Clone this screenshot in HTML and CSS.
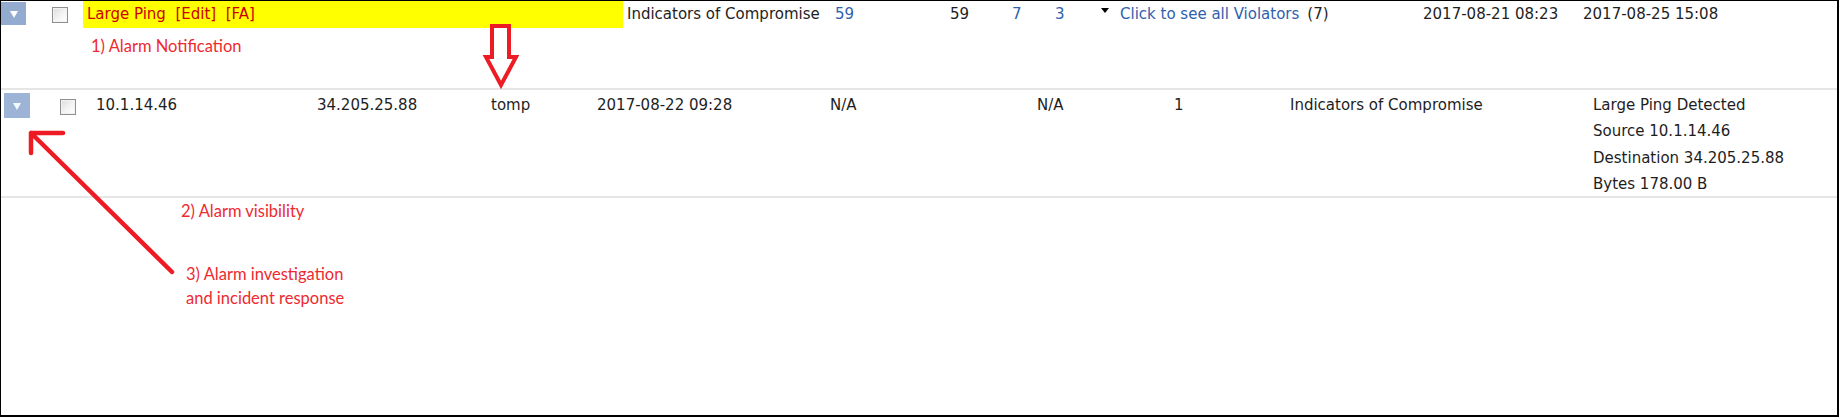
FILE: index.html
```html
<!DOCTYPE html>
<html>
<head>
<meta charset="utf-8">
<link rel="stylesheet" href="styles.css">
</head>
<body>
<div class="page">
  <div class="frame">
    <div class="row row-alarm">
      <div class="cell"><span class="toggle"></span></div>
      <div class="cell"><span class="check check-top"></span></div>
      <div class="cell name-cell">
        <div class="name">Large Ping&nbsp; [Edit]&nbsp; [FA]</div>
        <div class="note note-1">1) Alarm Notification</div>
      </div>
      <div class="cell cat">Indicators of Compromise</div>
      <div class="cell link">59</div>
      <div class="cell">59</div>
      <div class="cell link">7</div>
      <div class="cell link">3</div>
      <div class="cell violators"><span class="caret"></span><span class="link">Click to see all Violators</span><span class="count">(7)</span></div>
      <div class="cell">2017-08-21 08:23</div>
      <div class="cell">2017-08-25 15:08</div>
    </div>
    <div class="row row-event">
      <div class="cell"><span class="toggle toggle-light"></span></div>
      <div class="cell"><span class="check check-event"></span></div>
      <div class="cell">10.1.14.46</div>
      <div class="cell">34.205.25.88</div>
      <div class="cell">tomp</div>
      <div class="cell">2017-08-22 09:28</div>
      <div class="cell">N/A</div>
      <div class="cell">N/A</div>
      <div class="cell">1</div>
      <div class="cell">Indicators of Compromise</div>
      <div class="cell details">
        <div>Large Ping Detected</div>
        <div>Source 10.1.14.46</div>
        <div>Destination 34.205.25.88</div>
        <div>Bytes 178.00 B</div>
      </div>
    </div>
    <div class="notes">
      <div class="note note-2">2) Alarm visibility</div>
      <div class="note note-3">3) Alarm investigation<br>and incident response</div>
    </div>
  </div>
  <svg class="marks" width="1839" height="417" viewBox="0 0 1839 417">
    <path d="M492,26 H509 V57 H516 L501,85 L486,57 H492 Z" fill="none" stroke="#ed1c24" stroke-width="4" stroke-linejoin="miter"/>
    <path d="M63,133 H31 V153 M31,133 L172,272" fill="none" stroke="#ed1c24" stroke-width="4.5" stroke-linecap="round" stroke-linejoin="round"/>
  </svg>
</div>
</body>
</html>
```
FILE: styles.css
```css
html, body {
  margin: 0;
  padding: 0;
  background: #ffffff;
}

.page {
  position: relative;
  width: 1839px;
  height: 417px;
}

.frame {
  box-sizing: border-box;
  width: 1839px;
  height: 417px;
  border-style: solid;
  border-color: #000000;
  border-width: 1px 2px 2px 1px;
  background: #ffffff;
  font-family: "DejaVu Sans", Verdana, sans-serif;
  font-size: 15px;
  color: #1e1e1e;
}

.row {
  display: grid;
  border-bottom: 2px solid #e6e6e6;
}

.row-alarm {
  grid-template-columns: 51px 31px 540px 212px 115px 62px 43px 46px 322px 160px 1fr;
  height: 87px;
  line-height: 27px;
}

.row-event {
  grid-template-columns: 59px 36px 221px 174px 106px 233px 207px 137px 116px 303px 1fr;
  height: 104px;
  padding-top: 2px;
  line-height: 26.3px;
}

.cell {
  white-space: nowrap;
}

.toggle {
  display: flex;
  align-items: center;
  justify-content: center;
  width: 25px;
  height: 23px;
  margin-top: 1px;
  background: #93abcf;
}

.toggle::after {
  content: "";
  display: block;
  width: 0;
  height: 0;
  margin-top: 1px;
  border-left: 4px solid transparent;
  border-right: 4px solid transparent;
  border-top: 7px solid #ffffff;
}

.toggle-light {
  width: 26px;
  height: 25px;
  margin-top: 1px;
  margin-left: 3px;
  background: #9db4d6;
}

.toggle-light::after {
  border-top-color: #f4fbff;
}

.check {
  display: block;
  box-sizing: border-box;
  width: 16px;
  height: 16px;
  border: 1px solid #8f8f8f;
  background: linear-gradient(135deg, #dcdcdc 0%, #f4f4f4 55%, #ffffff 100%);
  box-shadow: inset 0 0 0 1px #f2f2f2;
}

.check-top {
  margin-top: 6px;
}

.check-event {
  margin-top: 7px;
}

.name-cell {
  display: flex;
  flex-direction: column;
}

.name {
  background: #ffff00;
  color: #cc0000;
  padding-left: 4px;
  height: 27px;
}

.cat {
  padding-left: 4px;
}

.link,
.link span {
  color: #2f5fae;
}

.violators {
  display: flex;
  align-items: flex-start;
}

.caret {
  display: block;
  width: 0;
  height: 0;
  margin-top: 7px;
  margin-right: 11px;
  border-left: 4px solid transparent;
  border-right: 4px solid transparent;
  border-top: 5px solid #000000;
}

.count {
  margin-left: 8px;
}

.details {
  line-height: 26.3px;
}

.note {
  font-family: Lato, "Open Sans", sans-serif;
  font-size: 16.5px;
  line-height: 24px;
  color: #ee2a30;
}

.note-1 {
  margin-top: 6px;
  padding-left: 8px;
}

.notes {
  padding-top: 1px;
}

.note-2 {
  padding-left: 180px;
}

.note-3 {
  margin-top: 39px;
  padding-left: 185px;
}

.marks {
  position: absolute;
  left: 0;
  top: 0;
  pointer-events: none;
}
```
